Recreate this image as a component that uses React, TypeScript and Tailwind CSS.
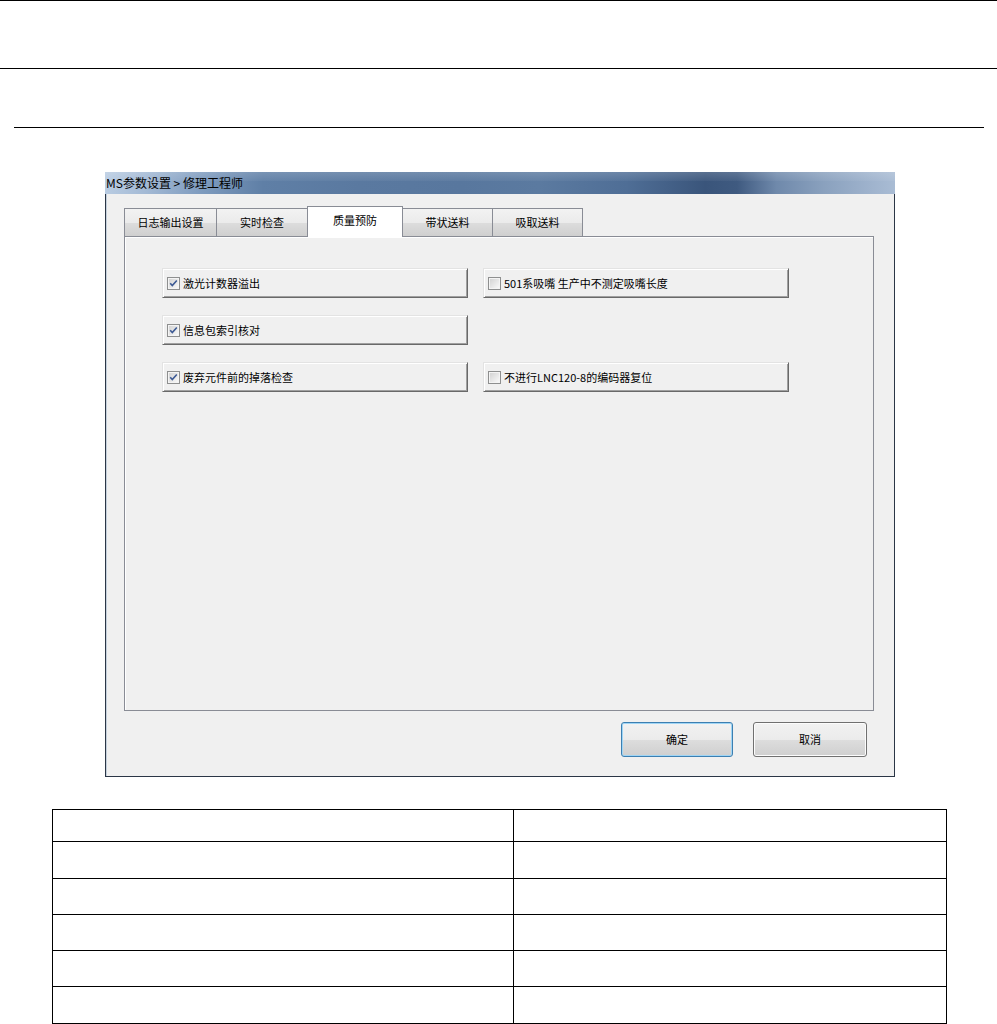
import React from "react";

const font = { fontFamily: '"Noto Sans CJK SC", "Liberation Sans", sans-serif' };

function Box({ checked }: { checked: boolean }) {
  return (
    <svg width="13" height="13" viewBox="0 0 13 13" className="shrink-0">
      <defs>
        <linearGradient id={checked ? "gc" : "gu"} x1="0" y1="0" x2="1" y2="1">
          <stop offset="0" stopColor="#d4d4d4" />
          <stop offset="1" stopColor="#f8f8f8" />
        </linearGradient>
      </defs>
      <rect x="0.5" y="0.5" width="12" height="12" fill="#f4f4f4" stroke="#8e8f8f" />
      <rect x="2" y="2" width="9" height="9" fill={`url(#${checked ? "gc" : "gu"})`} />
      {checked && (
        <path d="M3.2 6.2 L5.3 8.6 L9.8 3.4" fill="none" stroke="#3d5a94" strokeWidth="1.6" />
      )}
    </svg>
  );
}

function CheckBtn({ label, checked }: { label: string; checked: boolean }) {
  return (
    <div className="h-[30px] flex items-center gap-[3px] pl-[4px] bg-[#f0f0f0] border border-t-[#e3e3e3] border-l-[#e3e3e3] border-r-[#696969] border-b-[#696969] shadow-[inset_1px_1px_0_#ffffff,inset_-1px_-1px_0_#a0a0a0] text-[11px] text-black leading-none">
      <Box checked={checked} />
      <span>{label}</span>
    </div>
  );
}

function Tab({ label, w, selected }: { label: string; w: string; selected?: boolean }) {
  if (selected) {
    return (
      <div
        className={`${w} h-[31px] -mb-px relative z-10 bg-white border border-b-0 border-[#898c95] -ml-px flex items-center justify-center text-[11px] text-black pb-[3px]`}
      >
        {label}
      </div>
    );
  }
  return (
    <div
      className={`${w} h-[28px] bg-[linear-gradient(to_bottom,#f2f2f2_0%,#ebebeb_50%,#dddddd_51%,#cfcfcf_100%)] border border-[#898c95] border-b-0 -ml-px first:ml-0 flex items-center justify-center text-[11px] text-black`}
    >
      {label}
    </div>
  );
}

export default function App() {
  const rows = [32, 37, 36, 36, 36, 37];
  return (
    <div className="w-[997px] h-[1024px] bg-white flex flex-col overflow-hidden" style={font}>
      <div className="h-px bg-black shrink-0" />
      <div className="h-[67px] shrink-0" />
      <div className="h-px bg-black shrink-0" />
      <div className="h-[58px] shrink-0" />
      <div className="ml-[14px] w-[970px] h-px bg-black shrink-0" />
      <div className="h-[44px] shrink-0" />

      {/* Dialog */}
      <div className="ml-[105px] w-[790px] h-[605px] flex flex-col shrink-0">
        <div className="h-[22px] relative bg-[linear-gradient(90deg,#b9cce2_0%,#a4bad5_5%,#7f9cbf_12%,#5f7fa6_20%,#5a79a0_32%,#58779e_45%,#5b7aa0_55%,#4f6e96_66%,#3a557b_76%,#3f5a80_80%,#6f89ab_85%,#8aa1be_91%,#9fb3cd_97%,#a9bcd4_100%)] flex items-center pl-[1px] text-[12px] text-black leading-none">
          <div className="absolute inset-x-0 top-0 h-[9px] bg-[linear-gradient(to_bottom,rgba(255,255,255,0.16),rgba(255,255,255,0.04))]" />
          <span className="relative">MS参数设置 &gt; 修理工程师</span>
        </div>
        <div className="flex-1 bg-[#f0f0f0] border-l border-r border-b border-[#2b3646] shadow-[inset_1px_0_0_#c4d0dc] flex flex-col pl-[18px] pt-[12px]">
          <div className="flex items-end h-[30px]">
            <Tab label="日志输出设置" w="w-[93px]" />
            <Tab label="实时检查" w="w-[92px]" />
            <Tab label="质量预防" w="w-[96px]" selected />
            <Tab label="带状送料" w="w-[91px]" />
            <Tab label="吸取送料" w="w-[91px]" />
          </div>
          <div className="w-[750px] h-[475px] border border-[#898c95] bg-[#f0f0f0] shadow-[inset_1px_1px_0_#ffffff] pl-[37px] pt-[31px]">
            <div className="grid grid-cols-[306px_306px] gap-x-[15px] gap-y-[17px]">
              <CheckBtn label="激光计数器溢出" checked />
              <CheckBtn label="501系吸嘴 生产中不测定吸嘴长度" checked={false} />
              <CheckBtn label="信息包索引核对" checked />
              <div />
              <CheckBtn label="废弃元件前的掉落检查" checked />
              <CheckBtn label="不进行LNC120-8的编码器复位" checked={false} />
            </div>
          </div>
          <div className="flex justify-end gap-[20px] pr-[27px] mt-[11px]">
            <div className="w-[112px] h-[35px] rounded-[3px] border border-[#3c7fb1] shadow-[inset_0_0_0_1px_#9fd5f5] bg-[linear-gradient(to_bottom,#f2f2f2_0%,#ebebeb_50%,#dddddd_51%,#cfcfcf_100%)] flex items-center justify-center text-[11px] text-black">
              确定
            </div>
            <div className="w-[114px] h-[35px] rounded-[3px] border border-[#707070] shadow-[inset_0_0_0_1px_#fcfcfc] bg-[linear-gradient(to_bottom,#f2f2f2_0%,#ebebeb_50%,#dddddd_51%,#cfcfcf_100%)] flex items-center justify-center text-[11px] text-black">
              取消
            </div>
          </div>
        </div>
      </div>

      <div className="h-[32px] shrink-0" />

      {/* Table */}
      <div className="ml-[52px] w-[895px] border-t border-l border-black shrink-0">
        {rows.map((h, i) => (
          <div key={i} className="flex border-b border-black" style={{ height: h }}>
            <div className="w-[461px] border-r border-black" />
            <div className="flex-1 border-r border-black" />
          </div>
        ))}
      </div>
    </div>
  );
}
